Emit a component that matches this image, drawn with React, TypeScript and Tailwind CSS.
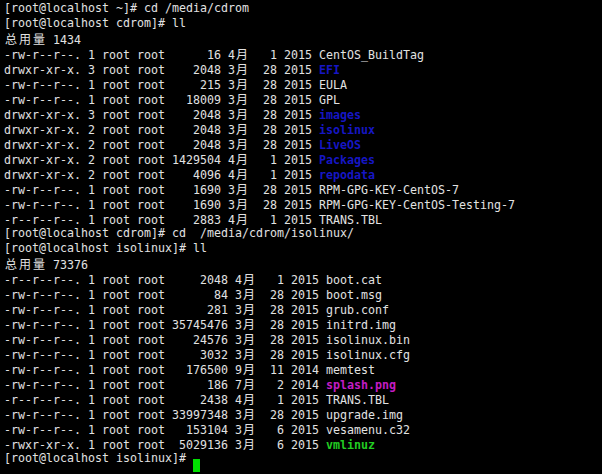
import React from "react";

type Seg = { t: string; c?: "blue" | "green" | "magenta" };

const isCJK = (ch: string) => /[\u3000-\u9fff\uff00-\uffef]/.test(ch);

function Run({ text }: { text: string }) {
  const parts: React.ReactNode[] = [];
  let buf = "";
  let k = 0;
  for (const ch of Array.from(text)) {
    if (isCJK(ch)) {
      if (buf) {
        parts.push(<span key={k++}>{buf}</span>);
        buf = "";
      }
      parts.push(
        <span
          key={k++}
          className="inline-block w-[14px] text-center text-[12px] leading-[15px] [font-family:'Noto_Sans_CJK_SC',sans-serif]"
        >
          {ch}
        </span>
      );
    } else {
      buf += ch;
    }
  }
  if (buf) parts.push(<span key={k++}>{buf}</span>);
  return <>{parts}</>;
}

function Seg({ s }: { s: Seg }) {
  if (s.c === "blue")
    return (
      <span className="font-bold text-[#1616c4]">
        <Run text={s.t} />
      </span>
    );
  if (s.c === "green")
    return (
      <span className="font-bold text-[#22cc22]">
        <Run text={s.t} />
      </span>
    );
  if (s.c === "magenta")
    return (
      <span className="font-bold text-[#c41cc4]">
        <Run text={s.t} />
      </span>
    );
  return <Run text={s.t} />;
}

const L = (t: string, name?: string, c?: Seg["c"]): Seg[] =>
  name === undefined ? [{ t }] : [{ t }, { t: name, c }];

const lines: Seg[][] = [
  L("[root@localhost ~]# cd /media/cdrom"),
  L("[root@localhost cdrom]# ll"),
  L("总用量 1434"),
  L("-rw-r--r--. 1 root root      16 4月   1 2015 ", "CentOS_BuildTag"),
  L("drwxr-xr-x. 3 root root    2048 3月  28 2015 ", "EFI", "blue"),
  L("-rw-r--r--. 1 root root     215 3月  28 2015 ", "EULA"),
  L("-rw-r--r--. 1 root root   18009 3月  28 2015 ", "GPL"),
  L("drwxr-xr-x. 3 root root    2048 3月  28 2015 ", "images", "blue"),
  L("drwxr-xr-x. 2 root root    2048 3月  28 2015 ", "isolinux", "blue"),
  L("drwxr-xr-x. 2 root root    2048 3月  28 2015 ", "LiveOS", "blue"),
  L("drwxr-xr-x. 2 root root 1429504 4月   1 2015 ", "Packages", "blue"),
  L("drwxr-xr-x. 2 root root    4096 4月   1 2015 ", "repodata", "blue"),
  L("-rw-r--r--. 1 root root    1690 3月  28 2015 ", "RPM-GPG-KEY-CentOS-7"),
  L("-rw-r--r--. 1 root root    1690 3月  28 2015 ", "RPM-GPG-KEY-CentOS-Testing-7"),
  L("-r--r--r--. 1 root root    2883 4月   1 2015 ", "TRANS.TBL"),
  L("[root@localhost cdrom]# cd  /media/cdrom/isolinux/"),
  L("[root@localhost isolinux]# ll"),
  L("总用量 73376"),
  L("-r--r--r--. 1 root root     2048 4月   1 2015 ", "boot.cat"),
  L("-rw-r--r--. 1 root root       84 3月  28 2015 ", "boot.msg"),
  L("-rw-r--r--. 1 root root      281 3月  28 2015 ", "grub.conf"),
  L("-rw-r--r--. 1 root root 35745476 3月  28 2015 ", "initrd.img"),
  L("-rw-r--r--. 1 root root    24576 3月  28 2015 ", "isolinux.bin"),
  L("-rw-r--r--. 1 root root     3032 3月  28 2015 ", "isolinux.cfg"),
  L("-rw-r--r--. 1 root root   176500 9月  11 2014 ", "memtest"),
  L("-rw-r--r--. 1 root root      186 7月   2 2014 ", "splash.png", "magenta"),
  L("-r--r--r--. 1 root root     2438 4月   1 2015 ", "TRANS.TBL"),
  L("-rw-r--r--. 1 root root 33997348 3月  28 2015 ", "upgrade.img"),
  L("-rw-r--r--. 1 root root   153104 3月   6 2015 ", "vesamenu.c32"),
  L("-rwxr-xr-x. 1 root root  5029136 3月   6 2015 ", "vmlinuz", "green"),
];

export default function App() {
  return (
    <div className="w-[602px] h-[474px] overflow-hidden bg-black pt-[1px] pl-[4px] text-[#e2e2e2] text-[11.63px] leading-[15px] whitespace-pre [font-family:'DejaVu_Sans_Mono',monospace]">
      {lines.map((segs, i) => (
        <div key={i} className="h-[15px]">
          {segs.map((s, j) => (
            <Seg key={j} s={s} />
          ))}
        </div>
      ))}
      <div className="h-[15px] flex items-start">
        <span>[root@localhost isolinux]# </span>
        <span className="inline-block w-[7px] h-[13px] mt-[8px] bg-[#00e000]" />
      </div>
    </div>
  );
}
